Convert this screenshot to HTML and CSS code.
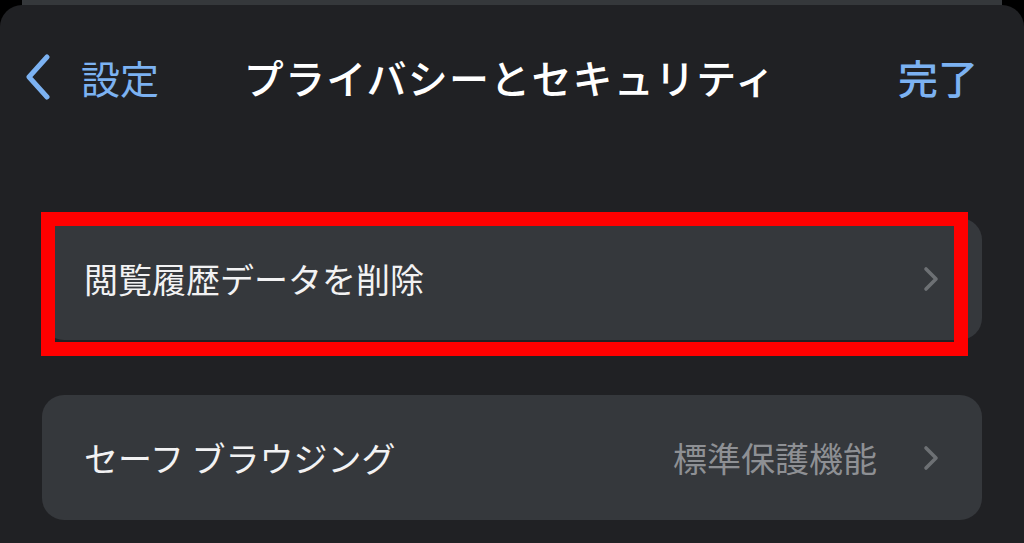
FILE: index.html
```html
<!DOCTYPE html>
<html lang="ja">
<head>
<meta charset="utf-8">
<title>プライバシーとセキュリティ</title>
<link rel="stylesheet" href="styles.css">
</head>
<body>
  <div class="stack-sheet"></div>
  <div class="sheet">
    <header class="nav">
      <a class="nav-back" href="#">
        <svg class="nav-back-icon" viewBox="0 0 26 46" width="26" height="46">
          <path d="M22 3 L4 23 L22 43" fill="none" stroke="currentColor" stroke-width="5" stroke-linecap="round" stroke-linejoin="round"/>
        </svg>
        <span>設定</span>
      </a>
      <h1 class="nav-title">プライバシーとセキュリティ</h1>
      <a class="nav-done" href="#">完了</a>
    </header>

    <section class="group group-first">
      <div class="row">
        <span class="row-label">閲覧履歴データを削除</span>
        <svg class="row-chevron" viewBox="0 0 16 26" width="16" height="26">
          <path d="M3 3 L13 13 L3 23" fill="none" stroke="currentColor" stroke-width="3.6" stroke-linecap="round" stroke-linejoin="round"/>
        </svg>
      </div>
      <div class="highlight"></div>
    </section>

    <section class="group">
      <div class="row">
        <span class="row-label">セーフ ブラウジング</span>
        <span class="row-value">標準保護機能</span>
        <svg class="row-chevron" viewBox="0 0 16 26" width="16" height="26">
          <path d="M3 3 L13 13 L3 23" fill="none" stroke="currentColor" stroke-width="3.6" stroke-linecap="round" stroke-linejoin="round"/>
        </svg>
      </div>
    </section>
  </div>
</body>
</html>
```

FILE: styles.css
```css
html, body {
  margin: 0;
  padding: 0;
  height: 100%;
  overflow: hidden;
}

body {
  background: #000;
  font-family: "Noto Sans CJK JP", "Noto Sans", sans-serif;
  color: #fff;
}

/* sheet sitting behind the current one */
.stack-sheet {
  height: 5px;
  margin: 0 22px;
  background: #35383b;
}

.sheet {
  background: #202124;
  border-radius: 22px 22px 0 0;
  height: calc(100% - 5px);
  padding: 42px 42px 0 42px;
  box-sizing: border-box;
}

.nav {
  display: grid;
  grid-template-columns: 1fr auto 1fr;
  align-items: center;
  height: 60px;
  margin: 0 -42px;
  padding: 0 25px;
}

.nav-back {
  display: flex;
  align-items: center;
  gap: 30px;
  color: #7cb2f2;
  text-decoration: none;
  font-size: 39px;
  line-height: 1;
  justify-self: start;
}

.nav-back-icon {
  display: block;
  color: #7cb2f2;
}

.nav-title {
  margin: 0 0 0 -4px;
  font-size: 40px;
  font-weight: 500;
  line-height: 1;
  color: #fff;
  letter-spacing: 1.2px;
}

.nav-done {
  justify-self: end;
  margin-right: 21px;
  color: #7cb2f2;
  text-decoration: none;
  font-size: 40px;
  font-weight: 500;
  line-height: 1;
}

.group {
  position: relative;
  background: #35383c;
  border-radius: 22px;
}

.group-first {
  margin-top: 111px;
  height: 122px;
}

.group + .group {
  margin-top: 55px;
  height: 125px;
}

.row {
  display: flex;
  align-items: center;
  height: 100%;
  padding: 0 43px 0 42px;
  font-size: 34px;
  line-height: 1;
}

.row-label {
  flex: 1;
  color: #f2f2f3;
}

.row-value {
  color: #8e9094;
  margin-right: 46px;
}

.row-chevron {
  display: block;
  color: #6d7074;
  flex: none;
}

/* red annotation frame over the first row */
.highlight {
  position: absolute;
  top: -6px;
  left: -1px;
  width: 927px;
  height: 144px;
  border: 14px solid #ff0000;
  box-sizing: border-box;
  pointer-events: none;
}
```
